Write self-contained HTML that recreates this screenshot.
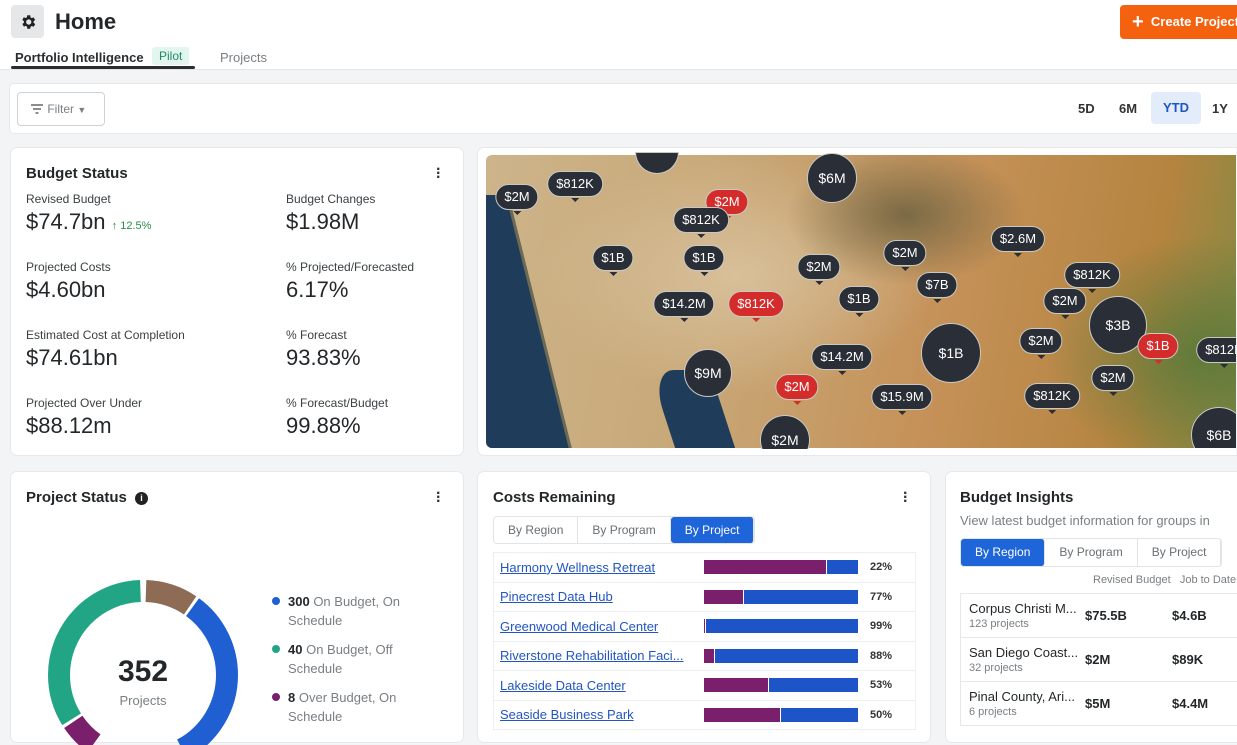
<!DOCTYPE html>
<html><head><meta charset="utf-8"><style>
*{box-sizing:border-box;margin:0;padding:0}
body{width:1237px;height:726px;overflow:hidden;background:#f3f4f5;font-family:"Liberation Sans",sans-serif;color:#232729;position:relative}
.abs{position:absolute}
.card{position:absolute;background:#fff;border-radius:6px;box-shadow:0 0 0 1px #e6e8ea}
.h{font-weight:bold;font-size:15px;color:#232729}
.lbl{font-size:12px;color:#3a3f42}
.val{font-size:22px;color:#232729}
.dots{position:absolute;font-size:16px;font-weight:bold;color:#333;line-height:4px;width:4px}
.m{position:absolute;background:#2a2e36;color:#fff;font-size:13px;border:1.5px solid #c9c9c4;border-radius:13px;height:26px;line-height:23px;padding:0 8px;transform:translate(-50%,-50%);white-space:nowrap}
.m:after{content:"";position:absolute;left:50%;bottom:-6px;margin-left:-4px;border:4px solid transparent;border-top:4px solid #2a2e36;border-bottom:0}
.m.r{background:#d42b2b}.m.r:after{border-top-color:#d42b2b}
.c{position:absolute;background:#2a2e36;color:#fff;font-size:14px;border:1.5px solid #c9c9c4;border-radius:50%;transform:translate(-50%,-50%);display:flex;align-items:center;justify-content:center}
.seg{display:flex;border:1px solid #e2e4e6;border-radius:4px;height:28px;font-size:12px;color:#6a6f73}
.seg div{padding:0 14px;line-height:26px;border-right:1px solid #e2e4e6}
.seg .on{background:#1d65d8;color:#fff;border-radius:3px}
.row{display:flex;align-items:center;height:29.5px;border-bottom:1px solid #eceeef;padding:0 6px;font-size:13px}
.row a{color:#2255c4;text-decoration:underline;width:204px;white-space:nowrap;overflow:hidden}
.bar{width:154px;height:14px;background:#1d55c8;display:flex}
.bar span{background:#7a1f6c;height:100%;border-right:1px solid #fff}
.pct{margin-left:12px;font-size:11px;font-weight:bold;color:#333}
.ir{display:flex;align-items:center;height:44px;border-bottom:1px solid #e6e8ea;padding-left:8px}
.ir .n{width:128px;font-size:13px;color:#232729}
.ir .n small{display:block;font-size:11px;color:#7a7f83;margin-top:2px}
.ir b{font-size:13px;width:96px}
</style></head><body>
<div class="abs" style="left:0;top:0;width:1237px;height:70px;background:#fff;border-bottom:1px solid #e3e5e7"></div>
<div class="abs" style="left:11px;top:5px;width:33px;height:33px;background:#e6e7e8;border-radius:4px;display:flex;align-items:center;justify-content:center">
<svg width="18" height="18" viewBox="0 0 24 24"><path fill="#222" d="M19.4 13a7.5 7.5 0 0 0 0-2l2.1-1.6-2-3.5-2.5 1a7 7 0 0 0-1.7-1L15 3h-4l-.4 2.7a7 7 0 0 0-1.7 1l-2.5-1-2 3.5L6.6 11a7.5 7.5 0 0 0 0 2l-2.1 1.6 2 3.5 2.5-1a7 7 0 0 0 1.7 1L11 21h4l.4-2.7a7 7 0 0 0 1.7-1l2.5 1 2-3.5zM13 15.5A3.5 3.5 0 1 1 13 8.5a3.5 3.5 0 0 1 0 7z"/></svg></div>
<div class="abs" style="left:55px;top:9px;font-size:22px;font-weight:bold">Home</div>
<div class="abs" style="left:15px;top:50px;font-size:13px;font-weight:bold;color:#2a2e30">Portfolio Intelligence</div>
<div class="abs" style="left:152px;top:47px;font-size:12px;color:#1f8a6a;background:#e3f5ef;padding:2px 7px;border-radius:3px">Pilot</div>
<div class="abs" style="left:11px;top:66px;width:184px;height:3px;background:#2a2e30;border-radius:2px"></div>
<div class="abs" style="left:220px;top:50px;font-size:13px;color:#7a7f83">Projects</div>
<div class="abs" style="left:1120px;top:5px;width:130px;height:34px;background:#f5620f;border-radius:4px;color:#fff;font-size:13px;font-weight:bold;line-height:34px;padding-left:12px"><span style="font-size:20px;vertical-align:-2px">+</span>&nbsp; Create Project</div>

<div class="abs" style="left:10px;top:84px;width:1240px;height:49px;background:#fff;border-radius:4px;box-shadow:0 0 0 1px #e6e8ea"></div>
<div class="abs" style="left:17px;top:92px;width:88px;height:34px;border:1px solid #cfd2d4;border-radius:4px;font-size:12px;color:#7a7f83;line-height:32px;padding-left:12px">
<svg width="14" height="10" viewBox="0 0 14 10" style="vertical-align:-1px"><path d="M1 1h12M3 5h8M5.5 9h3" stroke="#666" stroke-width="1.4"/></svg> Filter <span style="font-size:9px">▼</span></div>
<div class="abs" style="left:1078px;top:101px;font-size:13px;font-weight:bold;color:#333">5D</div>
<div class="abs" style="left:1119px;top:101px;font-size:13px;font-weight:bold;color:#333">6M</div>
<div class="abs" style="left:1151px;top:92px;width:50px;height:32px;background:#e3ecfb;border-radius:4px;font-size:13px;font-weight:bold;color:#1d55c8;text-align:center;line-height:32px">YTD</div>
<div class="abs" style="left:1212px;top:101px;font-size:13px;font-weight:bold;color:#333">1Y</div>

<div class="card" style="left:11px;top:148px;width:452px;height:307px">
<div class="h abs" style="left:15px;top:17px">Budget Status</div>
<div class="dots" style="left:425px;top:20px">·<br>·<br>·</div>
<div class="abs" style="left:15px;top:44px"><div class="lbl">Revised Budget</div><div class="val" style="margin-top:3px">$74.7bn <span style="font-size:11px;color:#2a8a4a">↑ 12.5%</span></div></div>
<div class="abs" style="left:275px;top:44px"><div class="lbl">Budget Changes</div><div class="val" style="margin-top:3px">$1.98M</div></div>
<div class="abs" style="left:15px;top:112px"><div class="lbl">Projected Costs</div><div class="val" style="margin-top:3px">$4.60bn</div></div>
<div class="abs" style="left:275px;top:112px"><div class="lbl">% Projected/Forecasted</div><div class="val" style="margin-top:3px">6.17%</div></div>
<div class="abs" style="left:15px;top:180px"><div class="lbl">Estimated Cost at Completion</div><div class="val" style="margin-top:3px">$74.61bn</div></div>
<div class="abs" style="left:275px;top:180px"><div class="lbl">% Forecast</div><div class="val" style="margin-top:3px">93.83%</div></div>
<div class="abs" style="left:15px;top:248px"><div class="lbl">Projected Over Under</div><div class="val" style="margin-top:3px">$88.12m</div></div>
<div class="abs" style="left:275px;top:248px"><div class="lbl">% Forecast/Budget</div><div class="val" style="margin-top:3px">99.88%</div></div>
</div>

<div class="card" style="left:478px;top:148px;width:780px;height:307px"></div>
<div class="abs" style="left:486px;top:155px;width:760px;height:293px;border-radius:6px;overflow:hidden;background:
radial-gradient(ellipse 120px 70px at 420px 60px,#7a6a45 0,transparent 100%),
radial-gradient(ellipse 160px 120px at 720px 200px,#5f7a3a 0,transparent 100%),
radial-gradient(ellipse 200px 120px at 250px 120px,#d8c09a 0,transparent 100%),
linear-gradient(100deg,#cdb48a 0,#c8a878 30%,#c59158 60%,#b5843f 85%,#7d8a44 100%)">
<div class="abs" style="left:-40px;top:40px;width:100px;height:300px;background:#1f3d5a;transform:skewX(14deg);border-right:3px solid #6b6a55"></div>
<div class="abs" style="left:180px;top:215px;width:60px;height:100px;background:#1f3d5a;border-radius:40% 0 0 0;transform:skewX(18deg)"></div>
</div>
<div class="c" style="left:657px;top:152px;width:44px;height:22px;border-radius:0 0 22px 22px;transform:translate(-50%,0)"></div>
<div class="m" style="left:517px;top:197px">$2M</div>
<div class="m" style="left:575px;top:184px">$812K</div>
<div class="m r" style="left:727px;top:202px">$2M</div>
<div class="m" style="left:701px;top:220px">$812K</div>
<div class="c" style="left:832px;top:178px;width:50px;height:50px">$6M</div>
<div class="m" style="left:613px;top:258px">$1B</div>
<div class="m" style="left:704px;top:258px">$1B</div>
<div class="m" style="left:819px;top:267px">$2M</div>
<div class="m" style="left:905px;top:253px">$2M</div>
<div class="m" style="left:1018px;top:239px">$2.6M</div>
<div class="m" style="left:937px;top:285px">$7B</div>
<div class="m" style="left:1092px;top:275px">$812K</div>
<div class="m" style="left:684px;top:304px">$14.2M</div>
<div class="m r" style="left:756px;top:304px">$812K</div>
<div class="m" style="left:859px;top:299px">$1B</div>
<div class="m" style="left:1065px;top:301px">$2M</div>
<div class="c" style="left:1118px;top:325px;width:58px;height:58px">$3B</div>
<div class="c" style="left:951px;top:353px;width:60px;height:60px">$1B</div>
<div class="m" style="left:1041px;top:341px">$2M</div>
<div class="m r" style="left:1158px;top:346px">$1B</div>
<div class="m" style="left:1224px;top:350px">$812K</div>
<div class="c" style="left:708px;top:373px;width:48px;height:48px">$9M</div>
<div class="m" style="left:842px;top:357px">$14.2M</div>
<div class="m r" style="left:797px;top:387px">$2M</div>
<div class="m" style="left:902px;top:397px">$15.9M</div>
<div class="m" style="left:1052px;top:396px">$812K</div>
<div class="m" style="left:1113px;top:378px">$2M</div>
<div class="c" style="left:785px;top:440px;width:50px;height:50px;clip-path:inset(0 0 16px 0)">$2M</div>
<div class="c" style="left:1219px;top:435px;width:56px;height:56px;clip-path:inset(0 0 15px 0)">$6B</div>
<div class="abs" style="left:1236px;top:148px;width:1px;height:307px;background:#f3f4f5"></div>

<div class="card" style="left:11px;top:472px;width:452px;height:270px">
<div class="h abs" style="left:15px;top:17px">Project Status <span style="display:inline-block;width:13px;height:13px;border-radius:50%;background:#222;color:#fff;font-size:9px;text-align:center;line-height:13px;margin-left:4px;vertical-align:1px">i</span></div>
<div class="dots" style="left:425px;top:20px">·<br>·<br>·</div>
</div>
<svg class="abs" style="left:0;top:545px" width="470" height="200">
<g transform="translate(143,130) rotate(-90)" fill="none" stroke-width="22">
<circle r="84" stroke="#8d6b55" stroke-dasharray="47 481" stroke-dashoffset="-3"/>
<circle r="84" stroke="#1f5fd1" stroke-dasharray="170 358" stroke-dashoffset="-53"/>
<circle r="84" stroke="#7a1f6c" stroke-dasharray="30 498" stroke-dashoffset="-316"/>
<circle r="84" stroke="#21a585" stroke-dasharray="176 352" stroke-dashoffset="-349"/>
</g></svg>
<div class="abs" style="left:93px;top:655px;width:100px;text-align:center;font-size:30px;font-weight:bold">352</div>
<div class="abs" style="left:93px;top:693px;width:100px;text-align:center;font-size:13px;color:#7a7f83">Projects</div>
<div class="abs" style="left:272px;top:592px;font-size:13px;color:#7a7f83;line-height:19px;width:160px">
<div style="position:relative;padding-left:16px"><i style="position:absolute;left:0;top:5px;width:8px;height:8px;border-radius:50%;background:#1f5fd1"></i><b style="color:#232729">300</b> On Budget, On Schedule</div>
<div style="position:relative;padding-left:16px;margin-top:10px"><i style="position:absolute;left:0;top:5px;width:8px;height:8px;border-radius:50%;background:#21a585"></i><b style="color:#232729">40</b> On Budget, Off Schedule</div>
<div style="position:relative;padding-left:16px;margin-top:10px"><i style="position:absolute;left:0;top:5px;width:8px;height:8px;border-radius:50%;background:#7a1f6c"></i><b style="color:#232729">8</b> Over Budget, On Schedule</div>
</div>

<div class="card" style="left:478px;top:472px;width:452px;height:270px">
<div class="h abs" style="left:15px;top:17px">Costs Remaining</div>
<div class="dots" style="left:425px;top:20px">·<br>·<br>·</div>
<div class="seg abs" style="left:15px;top:44px"><div>By Region</div><div>By Program</div><div class="on">By Project</div></div>
<div class="abs" style="left:15px;top:80px;width:423px;border:1px solid #eceeef;border-bottom:0">
<div class="row"><a>Harmony Wellness Retreat</a><div class="bar"><span style="width:80%"></span></div><div class="pct">22%</div></div>
<div class="row"><a>Pinecrest Data Hub</a><div class="bar"><span style="width:26%"></span></div><div class="pct">77%</div></div>
<div class="row"><a>Greenwood Medical Center</a><div class="bar"><span style="width:1%"></span></div><div class="pct">99%</div></div>
<div class="row"><a>Riverstone Rehabilitation Faci...</a><div class="bar"><span style="width:7%"></span></div><div class="pct">88%</div></div>
<div class="row"><a>Lakeside Data Center</a><div class="bar"><span style="width:42%"></span></div><div class="pct">53%</div></div>
<div class="row"><a>Seaside Business Park</a><div class="bar"><span style="width:50%"></span></div><div class="pct">50%</div></div>
</div>
</div>

<div class="card" style="left:946px;top:472px;width:310px;height:270px">
<div class="h abs" style="left:14px;top:17px">Budget Insights</div>
<div class="abs" style="left:14px;top:41px;font-size:13px;color:#7a7f83;white-space:nowrap">View latest budget information for groups in</div>
<div class="seg abs" style="left:14px;top:66px;height:29px"><div class="on" style="padding:0 14px">By Region</div><div>By Program</div><div>By Project</div></div>
<div class="abs" style="left:147px;top:102px;font-size:11px;color:#7a7f83;white-space:nowrap">Revised Budget&nbsp;&nbsp; Job to Date</div>
<div class="abs" style="left:14px;top:121px;width:300px;border:1px solid #e6e8ea;border-bottom:0">
<div class="ir"><div class="n">Corpus Christi M...<small>123 projects</small></div><b>$75.5B</b><b>$4.6B</b></div>
<div class="ir"><div class="n">San Diego Coast...<small>32 projects</small></div><b>$2M</b><b>$89K</b></div>
<div class="ir"><div class="n">Pinal County, Ari...<small>6 projects</small></div><b>$5M</b><b>$4.4M</b></div>
</div>
</div>
</body></html>
